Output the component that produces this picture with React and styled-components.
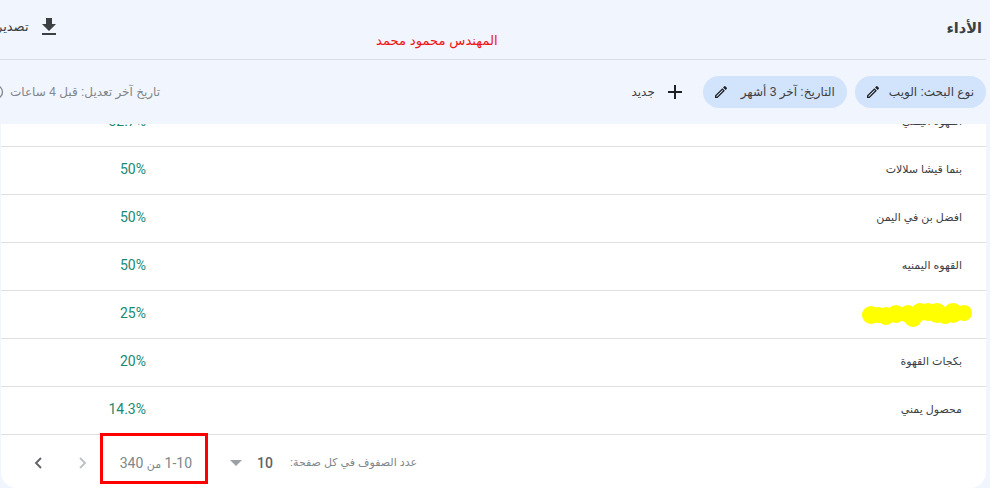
import React from 'react'
import styled, { createGlobalStyle } from 'styled-components'

const rows = [
  { name: 'القهوة اليمني', value: '32.7%' },
  { name: 'بنما قيشا سلالات', value: '50%' },
  { name: 'افضل بن في اليمن', value: '50%' },
  { name: 'القهوه اليمنيه', value: '50%' },
  { name: '', value: '25%', hidden: true },
  { name: 'بكجات القهوة', value: '20%' },
  { name: 'محصول يمني', value: '14.3%' }
]

// x, y, radius of the marker dabs that hide one keyword
const blobs = [
  [871, 315, 9], [878, 315, 8], [886, 316, 9], [896, 314, 9], [908, 314, 9], [913, 318, 9], [920, 312, 9],
  [928, 312, 9], [937, 313, 10], [945, 316, 8], [953, 313, 10], [964, 313, 8]
]

const App = () => (
  <Page>
    <GlobalStyle />
    <TitleBar>
      <Title>الأداء</Title>
      <ExportButton>
        <DownloadIcon />
        <span>تصدير</span>
      </ExportButton>
    </TitleBar>
    <FilterBar>
      <Chip>
        <span>نوع البحث: الويب</span>
        <PencilIcon />
      </Chip>
      <Chip $minWidth="144px">
        <span>التاريخ: آخر 3 أشهر</span>
        <PencilIcon />
      </Chip>
      <AddButton>
        <PlusIcon />
        <span>جديد</span>
      </AddButton>
      <Updated>
        <span>تاريخ آخر تعديل: قبل 4 ساعات</span>
        <ClockIcon />
      </Updated>
    </FilterBar>
    <Card>
      <Rows>
        {rows.map((row) => (
          <Row key={row.value + row.name}>
            <Name>{row.hidden ? <Scribble /> : row.name}</Name>
            <Value>{row.value}</Value>
          </Row>
        ))}
      </Rows>
      <Footer>
        <RowsLabel>عدد الصفوف في كل صفحة:</RowsLabel>
        <PageSize>10</PageSize>
        <Caret />
        <Range>1-10 <RangeWord>من</RangeWord> 340</Range>
        <Pager>
          <ChevronIcon $faded d="M7 3l5 5-5 5" />
          <ChevronIcon d="M11 3L6 8l5 5" />
        </Pager>
      </Footer>
    </Card>
    <Author>المهندس محمود محمد</Author>
    <Highlight />
  </Page>
)

export default App

const DownloadIcon = () => (
  <Icon width="24" height="24" viewBox="0 0 24 24">
    <path d="M19 9h-4V3H9v6H5l7 7 7-7zM5 18v2h14v-2H5z" fill="#3c4043" />
  </Icon>
)

const PencilIcon = () => (
  <Icon width="16" height="16" viewBox="0 0 24 24">
    <path
      d="M3 17.25V21h3.75L17.81 9.94l-3.75-3.75L3 17.25zM5.92 19H5v-.92l9.06-9.06.92.92L5.92 19zM20.71 7.04a1 1 0 0 0 0-1.41l-2.34-2.34a1 1 0 0 0-1.41 0l-1.83 1.83 3.75 3.75 1.83-1.83z"
      fill="#202124"
    />
  </Icon>
)

const PlusIcon = () => (
  <Icon width="24" height="24" viewBox="0 0 24 24">
    <path d="M19 13h-6v6h-2v-6H5v-2h6V5h2v6h6v2z" fill="#202124" />
  </Icon>
)

const ClockIcon = () => (
  <Icon width="16" height="16" viewBox="0 0 16 16">
    <circle cx="8" cy="8" r="6.5" fill="none" stroke="#80868b" strokeWidth="1.3" />
    <path d="M8 4.5V8l2.5 1.5" fill="none" stroke="#80868b" strokeWidth="1.2" />
  </Icon>
)

const ChevronIcon = ({ d, $faded }) => (
  <Icon width="18" height="16" viewBox="0 0 18 16">
    <path d={d} fill="none" stroke={$faded ? '#bdc1c6' : '#5f6368'} strokeWidth="1.9" />
  </Icon>
)

const Scribble = () => (
  <ScribbleSvg width="115" height="30" viewBox="860 300 115 30">
    {blobs.map(([x, y, r]) => (
      <circle key={x} cx={x} cy={y} r={r} fill="#ffff00" />
    ))}
  </ScribbleSvg>
)

const GlobalStyle = createGlobalStyle`
  html, body {
    margin: 0;
    padding: 0;
    background: #f1f5fd;
    overflow: hidden;
  }
`

const Page = styled.div`
  position: relative;
  width: 990px;
  height: 488px;
  overflow: hidden;
  direction: rtl;
  background: #f1f5fd;
  font-family: "Liberation Sans", "DejaVu Sans", sans-serif;
  color: #3c4043;
`

const Icon = styled.svg`
  display: block;
  flex: none;
`

const TitleBar = styled.header`
  display: flex;
  align-items: center;
  justify-content: space-between;
  box-sizing: border-box;
  width: 990px;
  height: 60px;
  margin-left: -4px;
  margin-right: 4px;
  padding-right: 4px;
  border-bottom: 1px solid #dadce0;
`

const Title = styled.h1`
  margin: -4px 0 0 0;
  font-size: 14.5px;
  font-weight: 700;
  color: #3c4043;
`

const ExportButton = styled.div`
  display: flex;
  align-items: center;
  gap: 8px;
  margin-top: -6px;
  font-size: 13px;
  color: #3c4043;
`

const FilterBar = styled.div`
  display: flex;
  align-items: center;
  width: 998px;
  height: 64px;
  margin-left: -12px;
  margin-right: 4px;
`

const Chip = styled.div`
  display: flex;
  align-items: center;
  justify-content: space-between;
  gap: 8px;
  box-sizing: border-box;
  height: 32px;
  min-width: ${(props) => props.$minWidth || 'auto'};
  padding: 0 12px 0 10px;
  margin-left: 8px;
  border-radius: 16px;
  background: #d2e3fc;
  font-size: 12px;
  color: #3c4043;
`

const AddButton = styled.div`
  display: flex;
  align-items: center;
  gap: 8px;
  margin-right: 8px;
  font-size: 12px;
  color: #3c4043;
`

const Updated = styled.div`
  display: flex;
  align-items: center;
  gap: 6px;
  margin-right: auto;
  font-size: 12px;
  color: #80868b;
`

const Card = styled.main`
  height: 364px;
  margin-left: 1px;
  margin-right: 4px;
  background: #fff;
  border-radius: 0 0 16px 16px;
  overflow: hidden;
`

const Rows = styled.div`
  height: 311px;
  overflow: hidden;
`

const Row = styled.div`
  display: flex;
  align-items: center;
  justify-content: space-between;
  box-sizing: border-box;
  height: 48px;
  padding: 0 24px 0 85px;
  border-bottom: 1px solid #e0e0e0;

  &:first-child {
    margin-top: -25px;
  }
`

const Name = styled.div`
  position: relative;
  padding-bottom: 2px;
  font-size: 11px;
  color: #3c4043;
`

const Value = styled.div`
  width: 60px;
  padding-bottom: 4px;
  font-family: Roboto, "Liberation Sans", sans-serif;
  font-size: 14px;
  text-align: right;
  direction: ltr;
  color: #188a75;
`

const ScribbleSvg = styled.svg`
  position: absolute;
  top: -14px;
  right: -13px;
`

const Footer = styled.footer`
  display: flex;
  align-items: center;
  height: 53px;
  padding: 2px 569px 0 0;
  box-sizing: border-box;
  font-family: Roboto, "Liberation Sans", sans-serif;
  color: #80868b;
`

const RowsLabel = styled.div`
  width: 124px;
  font-family: "Liberation Sans", "DejaVu Sans", sans-serif;
  font-size: 11px;
  white-space: nowrap;
`

const PageSize = styled.div`
  margin-right: 20px;
  font-size: 14px;
  font-weight: 500;
  color: #5f6368;
`

const Caret = styled.div`
  margin-right: 15px;
  border-left: 6px solid transparent;
  border-right: 6px solid transparent;
  border-top: 6px solid #9aa0a6;
`

const Range = styled.div`
  width: 70px;
  margin-right: 38px;
  font-size: 14px;
  white-space: nowrap;
`

const RangeWord = styled.span`
  font-family: "Liberation Sans", "DejaVu Sans", sans-serif;
  font-size: 11px;
`

const Pager = styled.div`
  display: flex;
  gap: 25px;
  margin-right: 31px;
`

const Author = styled.div`
  position: absolute;
  top: 33px;
  left: 376px;
  font-size: 13.2px;
  color: #f01414;
`

const Highlight = styled.div`
  position: absolute;
  left: 100px;
  top: 433px;
  width: 108px;
  height: 51px;
  box-sizing: border-box;
  border: 3px solid #ff0000;
`
